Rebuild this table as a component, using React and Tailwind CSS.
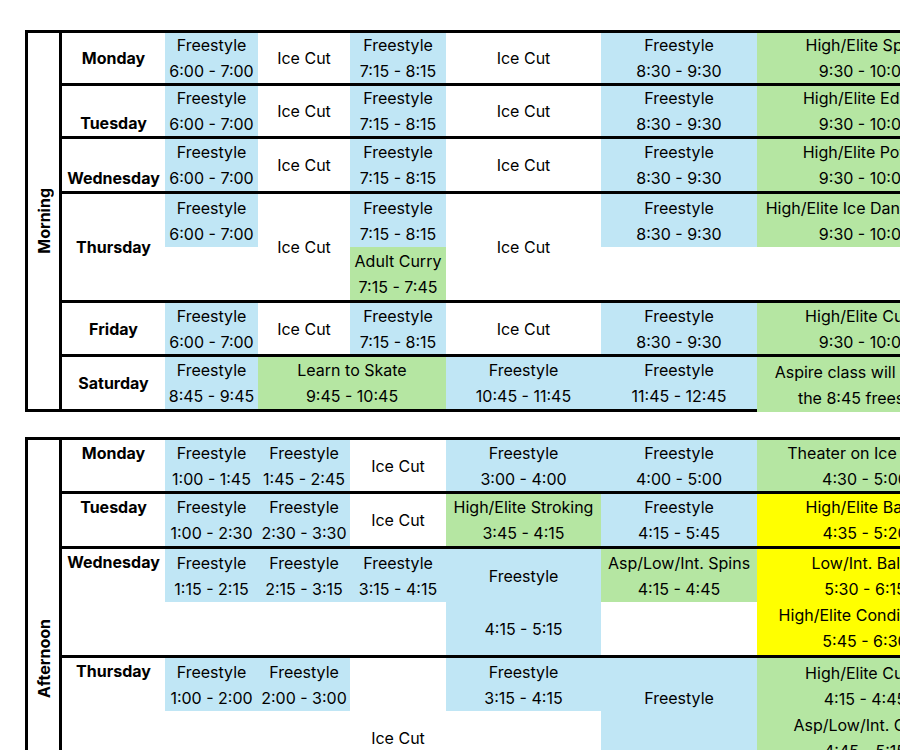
import React from 'react';

// one Excel-like schedule sheet, two blocks (morning / afternoon)
const BLUE = 'bg-[#c0e6f5]';
const GREEN = 'bg-[#b5e6a2]';
const YELLOW = 'bg-[#ffff00]';

const morning = [
    {
        day: 'Monday', rows: 'grid-rows-[25px_25px]', align: 'justify-center',
        cells: [
            ['row-span-2 ' + BLUE, 'Freestyle', '6:00 - 7:00'],
            ['row-span-2', 'Ice Cut'],
            ['row-span-2 ' + BLUE, 'Freestyle', '7:15 - 8:15'],
            ['row-span-2', 'Ice Cut'],
            ['row-span-2 ' + BLUE, 'Freestyle', '8:30 - 9:30'],
            ['row-span-2 ' + GREEN, 'High/Elite Spins', '9:30 - 10:00'],
        ],
    },
    {
        day: 'Tuesday', rows: 'grid-rows-[25px_25px]', align: 'justify-end',
        cells: [
            ['row-span-2 ' + BLUE, 'Freestyle', '6:00 - 7:00'],
            ['row-span-2', 'Ice Cut'],
            ['row-span-2 ' + BLUE, 'Freestyle', '7:15 - 8:15'],
            ['row-span-2', 'Ice Cut'],
            ['row-span-2 ' + BLUE, 'Freestyle', '8:30 - 9:30'],
            ['row-span-2 ' + GREEN, 'High/Elite Edges', '9:30 - 10:00'],
        ],
    },
    {
        day: 'Wednesday', rows: 'grid-rows-[26px_26px]', align: 'justify-end',
        cells: [
            ['row-span-2 ' + BLUE, 'Freestyle', '6:00 - 7:00'],
            ['row-span-2', 'Ice Cut'],
            ['row-span-2 ' + BLUE, 'Freestyle', '7:15 - 8:15'],
            ['row-span-2', 'Ice Cut'],
            ['row-span-2 ' + BLUE, 'Freestyle', '8:30 - 9:30'],
            ['row-span-2 ' + GREEN, 'High/Elite Power', '9:30 - 10:00'],
        ],
    },
    {
        day: 'Thursday', rows: 'grid-rows-[26.5px_26.5px_26.5px_26.5px]', align: 'justify-center',
        cells: [
            ['row-span-2 ' + BLUE, 'Freestyle', '6:00 - 7:00'],
            ['row-span-4', 'Ice Cut'],
            ['row-span-2 ' + BLUE, 'Freestyle', '7:15 - 8:15'],
            ['row-span-4', 'Ice Cut'],
            ['row-span-2 ' + BLUE, 'Freestyle', '8:30 - 9:30'],
            ['row-span-2 ' + GREEN, 'High/Elite Ice Dance Class', '9:30 - 10:00'],
            ['row-span-2'],
            ['row-span-2 ' + GREEN, 'Adult Curry', '7:15 - 7:45'],
            ['row-span-2'],
            ['row-span-2'],
        ],
    },
    {
        day: 'Friday', rows: 'grid-rows-[25.5px_25.5px]', align: 'justify-center',
        cells: [
            ['row-span-2 ' + BLUE, 'Freestyle', '6:00 - 7:00'],
            ['row-span-2', 'Ice Cut'],
            ['row-span-2 ' + BLUE, 'Freestyle', '7:15 - 8:15'],
            ['row-span-2', 'Ice Cut'],
            ['row-span-2 ' + BLUE, 'Freestyle', '8:30 - 9:30'],
            ['row-span-2 ' + GREEN, 'High/Elite Curry', '9:30 - 10:00'],
        ],
    },
    {
        day: 'Saturday', rows: 'grid-rows-[27.5px_27.5px]', align: 'justify-center', last: true,
        cells: [
            ['row-span-2 border-b-[3px] border-black ' + BLUE, 'Freestyle', '8:45 - 9:45'],
            ['row-span-2 col-span-2 border-b-[3px] border-black ' + GREEN, 'Learn to Skate', '9:45 - 10:45'],
            ['row-span-2 border-b-[3px] border-black ' + BLUE, 'Freestyle', '10:45 - 11:45'],
            ['row-span-2 border-b-[3px] border-black ' + BLUE, 'Freestyle', '11:45 - 12:45'],
            ['row-span-2 ' + GREEN, 'Aspire class will be with', 'the 8:45 freestyle'],
        ],
    },
];

const afternoon = [
    {
        day: 'Monday', rows: 'grid-rows-[25.5px_25.5px]', align: 'justify-start',
        cells: [
            ['row-span-2 ' + BLUE, 'Freestyle', '1:00 - 1:45'],
            ['row-span-2 ' + BLUE, 'Freestyle', '1:45 - 2:45'],
            ['row-span-2', 'Ice Cut'],
            ['row-span-2 ' + BLUE, 'Freestyle', '3:00 - 4:00'],
            ['row-span-2 ' + BLUE, 'Freestyle', '4:00 - 5:00'],
            ['row-span-2 ' + GREEN, 'Theater on Ice Team', '4:30 - 5:00'],
        ],
    },
    {
        day: 'Tuesday', rows: 'grid-rows-[26px_26px]', align: 'justify-start',
        cells: [
            ['row-span-2 ' + BLUE, 'Freestyle', '1:00 - 2:30'],
            ['row-span-2 ' + BLUE, 'Freestyle', '2:30 - 3:30'],
            ['row-span-2', 'Ice Cut'],
            ['row-span-2 ' + GREEN, 'High/Elite Stroking', '3:45 - 4:15'],
            ['row-span-2 ' + BLUE, 'Freestyle', '4:15 - 5:45'],
            ['row-span-2 ' + YELLOW, 'High/Elite Ballet', '4:35 - 5:20'],
        ],
    },
    {
        day: 'Wednesday', rows: 'grid-rows-[26.5px_26.5px_26.5px_26.5px]', align: 'justify-start',
        cells: [
            ['row-span-2 ' + BLUE, 'Freestyle', '1:15 - 2:15'],
            ['row-span-2 ' + BLUE, 'Freestyle', '2:15 - 3:15'],
            ['row-span-2 ' + BLUE, 'Freestyle', '3:15 - 4:15'],
            ['row-span-2 ' + BLUE, 'Freestyle'],
            ['row-span-2 ' + GREEN, 'Asp/Low/Int. Spins', '4:15 - 4:45'],
            ['row-span-4 ' + YELLOW, 'Low/Int. Ballet', '5:30 - 6:15', 'High/Elite Conditioning', '5:45 - 6:30'],
            ['row-span-2 col-span-3'],
            ['row-span-2 ' + BLUE, '4:15 - 5:15'],
            ['row-span-2'],
        ],
    },
    {
        day: 'Thursday', rows: 'grid-rows-[26.5px_26.5px_26.5px_26.5px_27px_27px]', align: 'justify-start',
        cells: [
            ['row-span-2 ' + BLUE, 'Freestyle', '1:00 - 2:00'],
            ['row-span-2 ' + BLUE, 'Freestyle', '2:00 - 3:00'],
            ['row-span-6', 'Ice Cut'],
            ['row-span-2 ' + BLUE, 'Freestyle', '3:15 - 4:15'],
            ['row-span-3 ' + BLUE, 'Freestyle'],
            ['row-span-6 ' + GREEN, 'High/Elite Curry', '4:15 - 4:45', 'Asp/Low/Int. Curry', '4:45 - 5:15', 'Low/Int. Stroking', '5:15 - 5:45'],
            ['row-span-4 col-span-2'],
            ['row-span-4'],
            ['row-span-3 ' + BLUE],
        ],
    },
    {
        day: 'Friday', rows: 'grid-rows-[26px_26px]', align: 'justify-start',
        cells: [
            ['row-span-2 ' + BLUE, 'Freestyle', '1:00 - 2:00'],
            ['row-span-2 ' + BLUE, 'Freestyle', '2:00 - 3:00'],
            ['row-span-2', 'Ice Cut'],
            ['row-span-2 ' + BLUE, 'Freestyle', '3:15 - 4:15'],
            ['row-span-2 ' + BLUE, 'Freestyle', '4:15 - 5:15'],
            ['row-span-2 ' + GREEN, 'Theater on Ice Team', '4:30 - 5:30'],
        ],
    },
];

const Cell = ({ cls, lines }) => (
    <div className={`flex flex-col items-center justify-center text-center whitespace-nowrap ${cls}`}>
        {lines.map((t, i) => (
            <span key={i} className="leading-[26px]">{t}</span>
        ))}
    </div>
);

const DayRow = ({ row }) => (
    <div
        className={`grid grid-cols-[103px_93px_92px_96px_155px_156px_216px] ${row.rows} ${row.last ? '' : 'border-b-[3px] border-black'}`}
    >
        <div
            className={`flex flex-col items-center font-bold leading-[26px] ${row.align} ${row.last ? 'border-b-[3px] border-black' : ''}`}
            style={{ gridRow: '1 / -1' }}
        >
            {row.day}
        </div>
        {row.cells.map(([cls, ...lines], i) => (
            <Cell key={i} cls={cls} lines={lines} />
        ))}
    </div>
);

const Section = ({ label, rows, closed }) => (
    <div className="flex border-l-[3px] border-t-[3px] border-black">
        <div className={`w-[34px] shrink-0 flex items-center justify-center border-r-[3px] border-black ${closed ? 'border-b-[3px]' : ''}`}>
            <span className="[writing-mode:vertical-rl] rotate-180 font-bold leading-none">{label}</span>
        </div>
        <div className="flex flex-col">
            {rows.map(r => <DayRow key={r.day} row={r} />)}
        </div>
    </div>
);

export default function App() {
    return (
        <div className="w-[900px] h-[750px] overflow-hidden bg-white text-black text-[16px] font-['Inter',sans-serif]">
            <div className="pt-[30px] pl-[25px] flex flex-col gap-[25px] w-[1100px]">
                <Section label="Morning" rows={morning} closed />
                <Section label="Afternoon" rows={afternoon} />
            </div>
        </div>
    );
}
